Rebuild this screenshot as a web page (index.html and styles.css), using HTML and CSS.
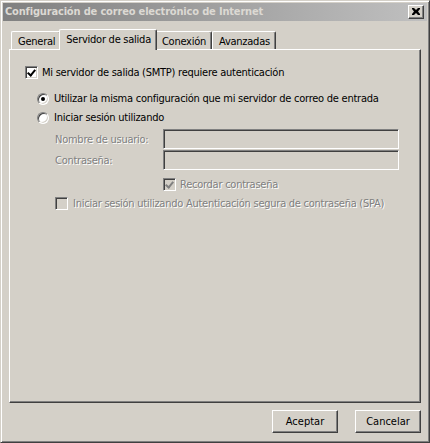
FILE: index.html
```html
<!DOCTYPE html>
<html lang="es">
<head>
<meta charset="utf-8">
<title>Configuración de correo electrónico de Internet</title>
<link rel="stylesheet" href="styles.css">
</head>
<body>
<div class="window">
  <div class="titlebar">
    <span class="title">Configuración de correo electrónico de Internet</span>
    <span class="close-btn">
      <svg width="8" height="7" viewBox="0 0 8 7"><path d="M0 0h2l2 2 2-2h2v1L6 3.5 8 6v1H6L4 5 2 7H0V6l2-2.5L0 1z" fill="#000"/></svg>
    </span>
  </div>
  <div class="tabstrip">
    <div class="tab">General</div>
    <div class="tab selected">Servidor de salida</div>
    <div class="tab">Conexión</div>
    <div class="tab">Avanzadas</div>
  </div>
  <div class="panel">
    <div class="row row-auth">
      <span class="check checked"></span>
      <span class="label">Mi servidor de salida (SMTP) requiere autenticación</span>
    </div>
    <div class="row row-radio1">
      <span class="radio on"></span>
      <span class="label">Utilizar la misma configuración que mi servidor de correo de entrada</span>
    </div>
    <div class="row row-radio2">
      <span class="radio"></span>
      <span class="label">Iniciar sesión utilizando</span>
    </div>
    <div class="form">
      <span class="label disabled">Nombre de usuario:</span>
      <span class="input"></span>
      <span class="label disabled">Contraseña:</span>
      <span class="input"></span>
    </div>
    <div class="row row-remember">
      <span class="check checked disabled-box"></span>
      <span class="label disabled">Recordar contraseña</span>
    </div>
    <div class="row row-spa">
      <span class="check disabled-box"></span>
      <span class="label disabled">Iniciar sesión utilizando Autenticación segura de contraseña (SPA)</span>
    </div>
  </div>
  <div class="buttons">
    <button class="btn">Aceptar</button>
    <button class="btn">Cancelar</button>
  </div>
</div>
</body>
</html>
```
FILE: styles.css
```css
html, body {
  margin: 0;
  padding: 0;
  background: #d4d0c8;
}
body {
  font-family: "DejaVu Sans Condensed", "Liberation Sans", sans-serif;
  font-size: 11px;
  letter-spacing: -0.25px;
  color: #000;
}
.window {
  box-sizing: border-box;
  width: 430px;
  height: 443px;
  background: #d4d0c8;
  border-top: 1px solid #d4d0c8;
  border-left: 1px solid #d4d0c8;
  border-right: 1px solid #404040;
  border-bottom: 1px solid #404040;
  box-shadow: inset 1px 1px #fff, inset -1px -1px #808080;
  padding: 2px;
  display: flex;
  flex-direction: column;
}
.titlebar {
  height: 18px;
  background: linear-gradient(to right, #808080, #c0c0c0);
  display: flex;
  align-items: flex-start;
  justify-content: space-between;
}
.title {
  color: #dcd9d3;
  font-weight: bold;
  font-size: 11px;
  letter-spacing: -0.17px;
  line-height: 18px;
  padding-left: 2px;
  white-space: nowrap;
}
.close-btn {
  box-sizing: border-box;
  width: 16px;
  height: 14px;
  margin: 2px 3px 0 0;
  background: #d4d0c8;
  border-top: 1px solid #fff;
  border-left: 1px solid #fff;
  border-right: 1px solid #404040;
  border-bottom: 1px solid #404040;
  box-shadow: inset -1px -1px #808080;
  display: flex;
  align-items: center;
  justify-content: center;
}
.close-btn svg { display: block; margin: 0 1px 1px 0; }
.tabstrip {
  display: flex;
  align-items: flex-end;
  height: 20px;
  margin: 8px 0 0 8px;
  position: relative;
  z-index: 1;
}
.tab {
  box-sizing: border-box;
  height: 18px;
  padding: 1px 5px 0 6px;
  line-height: 17px;
  border-top: 1px solid #fff;
  border-left: 1px solid #fff;
  border-right: 1px solid #404040;
  border-radius: 2px 2px 0 0;
  box-shadow: inset -1px 0 #808080;
  background: #d4d0c8;
  white-space: nowrap;
}
.tab.selected {
  height: 21px;
  margin: 0 -2px -1px -2px;
  padding: 1px 5px 0 6px;
  line-height: 17px;
  position: relative;
  z-index: 2;
}
.panel {
  box-sizing: border-box;
  height: 354px;
  margin: 0 6px 0 6px;
  border-top: 1px solid #fff;
  border-left: 1px solid #fff;
  border-right: 1px solid #404040;
  border-bottom: 1px solid #404040;
  box-shadow: inset -1px -1px #808080;
  padding: 16px 0 0 15px;
  display: flex;
  flex-direction: column;
  align-items: flex-start;
}
.row {
  display: flex;
  align-items: center;
  height: 13px;
  white-space: nowrap;
}
.row-radio1 { margin: 13px 0 0 12px; }
.row-radio2 { margin: 6px 0 0 12px; }
.row-remember { margin: 8px 0 0 138px; }
.row-spa { margin: 6px 0 0 30px; }
.check {
  box-sizing: border-box;
  width: 13px;
  height: 13px;
  flex: none;
  background: #fff;
  border-top: 1px solid #808080;
  border-left: 1px solid #808080;
  border-right: 1px solid #fff;
  border-bottom: 1px solid #fff;
  box-shadow: inset 1px 1px #404040, inset -1px -1px #d4d0c8;
  margin-right: 4px;
  position: relative;
}
.check.checked::after {
  content: "";
  position: absolute;
  left: 2px;
  top: 1px;
  width: 3px;
  height: 6px;
  border-right: 2px solid #000;
  border-bottom: 2px solid #000;
  transform: translate(1px, 0) rotate(40deg);
  transform-origin: 50% 50%;
}
.check.disabled-box { background: #d4d0c8; }
.check.disabled-box.checked::after { border-color: #808080; }
.row-spa .check { margin-right: 5px; }
.radio {
  box-sizing: border-box;
  width: 12px;
  height: 12px;
  flex: none;
  border-radius: 50%;
  background: #fff;
  border: 1px solid;
  border-color: #808080 #fff #fff #808080;
  box-shadow: inset 1px 1px #404040, inset -1px -1px #d4d0c8;
  margin-right: 5px;
  position: relative;
}
.radio.on::after {
  content: "";
  position: absolute;
  left: 3px;
  top: 3px;
  width: 4px;
  height: 4px;
  border-radius: 50%;
  background: #000;
}
.label { line-height: 13px; }
.disabled {
  color: #808080;
  text-shadow: 1px 1px #fff;
}
.form {
  display: grid;
  grid-template-columns: 108px 236px;
  row-gap: 1px;
  align-items: center;
  margin: 5px 0 0 30px;
}
.input {
  box-sizing: border-box;
  height: 20px;
  background: #d4d0c8;
  border-top: 1px solid #808080;
  border-left: 1px solid #808080;
  border-right: 1px solid #fff;
  border-bottom: 1px solid #fff;
  box-shadow: inset 1px 1px #404040, inset -1px -1px #d4d0c8;
}
.buttons {
  display: flex;
  justify-content: flex-end;
  gap: 17px;
  margin: 7px 6px 0 0;
}
.btn {
  box-sizing: border-box;
  width: 66px;
  height: 23px;
  font: inherit;
  color: #000;
  background: #d4d0c8;
  border-top: 1px solid #fff;
  border-left: 1px solid #fff;
  border-right: 1px solid #404040;
  border-bottom: 1px solid #404040;
  box-shadow: inset -1px -1px #808080;
  padding: 0;
}
```
